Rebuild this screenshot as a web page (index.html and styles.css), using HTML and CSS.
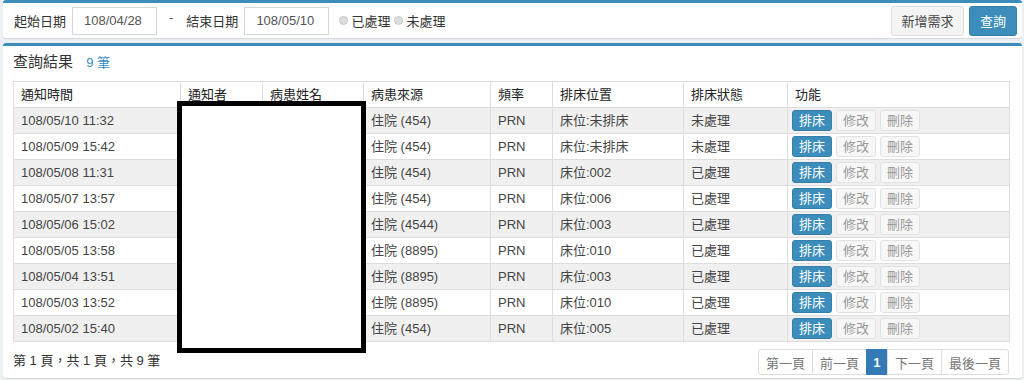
FILE: index.html
```html
<!DOCTYPE html>
<html lang="zh-Hant">
<head>
<meta charset="utf-8">
<link rel="stylesheet" href="styles.css">
</head>
<body>
<div class="panel search-panel">
  <div class="search-row">
    <span class="label">起始日期</span>
    <span class="input">108/04/28</span>
    <span class="dash">-</span>
    <span class="label">結束日期</span>
    <span class="input">108/05/10</span>
    <span class="radio"></span><span class="radio-label">已處理</span>
    <span class="radio"></span><span class="radio-label">未處理</span>
    <span class="spacer"></span>
    <span class="btn btn-default">新增需求</span>
    <span class="btn btn-primary">查詢</span>
  </div>
</div>

<div class="panel result-panel">
  <div class="result-title">查詢結果 <span class="count">9 筆</span></div>
  <div class="table-wrap">
    <table class="grid">
      <colgroup>
        <col class="c1"><col class="c2"><col class="c3"><col class="c4"><col class="c5"><col class="c6"><col class="c7"><col>
      </colgroup>
      <thead>
        <tr><th>通知時間</th><th>通知者</th><th>病患姓名</th><th>病患來源</th><th>頻率</th><th>排床位置</th><th>排床狀態</th><th>功能</th></tr>
      </thead>
      <tbody>
        <tr><td>108/05/10 11:32</td><td></td><td></td><td>住院 (454)</td><td>PRN</td><td>床位:未排床</td><td>未處理</td><td class="ops"><span class="sbtn blue">排床</span><span class="sbtn">修改</span><span class="sbtn">刪除</span></td></tr>
        <tr><td>108/05/09 15:42</td><td></td><td></td><td>住院 (454)</td><td>PRN</td><td>床位:未排床</td><td>未處理</td><td class="ops"><span class="sbtn blue">排床</span><span class="sbtn">修改</span><span class="sbtn">刪除</span></td></tr>
        <tr><td>108/05/08 11:31</td><td></td><td></td><td>住院 (454)</td><td>PRN</td><td>床位:002</td><td>已處理</td><td class="ops"><span class="sbtn blue">排床</span><span class="sbtn">修改</span><span class="sbtn">刪除</span></td></tr>
        <tr><td>108/05/07 13:57</td><td></td><td></td><td>住院 (454)</td><td>PRN</td><td>床位:006</td><td>已處理</td><td class="ops"><span class="sbtn blue">排床</span><span class="sbtn">修改</span><span class="sbtn">刪除</span></td></tr>
        <tr><td>108/05/06 15:02</td><td></td><td></td><td>住院 (4544)</td><td>PRN</td><td>床位:003</td><td>已處理</td><td class="ops"><span class="sbtn blue">排床</span><span class="sbtn">修改</span><span class="sbtn">刪除</span></td></tr>
        <tr><td>108/05/05 13:58</td><td></td><td></td><td>住院 (8895)</td><td>PRN</td><td>床位:010</td><td>已處理</td><td class="ops"><span class="sbtn blue">排床</span><span class="sbtn">修改</span><span class="sbtn">刪除</span></td></tr>
        <tr><td>108/05/04 13:51</td><td></td><td></td><td>住院 (8895)</td><td>PRN</td><td>床位:003</td><td>已處理</td><td class="ops"><span class="sbtn blue">排床</span><span class="sbtn">修改</span><span class="sbtn">刪除</span></td></tr>
        <tr><td>108/05/03 13:52</td><td></td><td></td><td>住院 (8895)</td><td>PRN</td><td>床位:010</td><td>已處理</td><td class="ops"><span class="sbtn blue">排床</span><span class="sbtn">修改</span><span class="sbtn">刪除</span></td></tr>
        <tr><td>108/05/02 15:40</td><td></td><td></td><td>住院 (454)</td><td>PRN</td><td>床位:005</td><td>已處理</td><td class="ops"><span class="sbtn blue">排床</span><span class="sbtn">修改</span><span class="sbtn">刪除</span></td></tr>
      </tbody>
    </table>
    <div class="redact"></div>
  </div>
  <div class="footer">
    <span class="pageinfo">第 1 頁，共 1 頁，共 9 筆</span>
    <div class="pager">
      <span class="pg">第一頁</span><span class="pg">前一頁</span><span class="pg active">1</span><span class="pg">下一頁</span><span class="pg">最後一頁</span>
    </div>
  </div>
</div>
</body>
</html>
```

FILE: styles.css
```css
* { box-sizing: border-box; }
html, body { margin: 0; padding: 0; }
body {
  background: #ecf0f5;
  font-family: "Liberation Sans", "Noto Sans CJK TC", sans-serif;
  font-size: 13px;
  color: #333;
  width: 1024px;
  height: 380px;
  overflow: hidden;
}
.panel {
  background: #fff;
  border-top: 3px solid #3c8dbc;
  margin: 0 2px 0 3px;
  border-radius: 3px;
  box-shadow: 0 1px 1px rgba(0,0,0,0.1);
}
.search-panel { height: 38px; }
.search-row {
  display: flex;
  align-items: center;
  height: 35px;
  padding: 0 5px 0 11px;
}
.label { color: #333; margin-right: 6px; font-size: 13px; }
.input {
  display: inline-flex;
  align-items: center;
  width: 85px;
  height: 28px;
  border: 1px solid #d2d6de;
  padding-left: 11px;
  color: #555;
  font-size: 13px;
}
.dash { margin: 0 13px 0 12px; color: #555; position: relative; top: -3px; }
.radio {
  width: 9px; height: 9px;
  border-radius: 50%;
  background: #ddd;
  border: 1px solid #c8c8c8;
  margin: 0 3px 0 10px;
}
.radio + .radio-label + .radio { margin-left: 4px; }
.radio-label { color: #333; }
.spacer { flex: 1; }
.btn {
  display: inline-flex;
  align-items: center;
  justify-content: center;
  height: 30px;
  border-radius: 3px;
  font-size: 13px;
}
.btn-default {
  width: 73px;
  background: #f4f4f4;
  border: 1px solid #ddd;
  color: #444;
  margin-right: 5px;
}
.btn-primary {
  width: 48px;
  background: #3c8dbc;
  border: 1px solid #367fa9;
  color: #fff;
}
.result-panel {
  margin-top: 5px;
  height: 335px;
  padding: 0 10px;
}
.result-title {
  font-size: 15px;
  line-height: 22px;
  padding: 5px 0 7px;
  color: #333;
}
.count { color: #3c8dbc; font-size: 13px; margin-left: 9px; }
.table-wrap { position: relative; }
.grid {
  width: 997px;
  border-collapse: collapse;
  border: 1px solid #ddd;
  table-layout: fixed;
}
.c1 { width: 167px; } .c2 { width: 82px; } .c3 { width: 101px; } .c4 { width: 127px; }
.c5 { width: 62px; } .c6 { width: 131px; } .c7 { width: 104px; }
.grid th, .grid td {
  border: 1px solid #ddd;
  text-align: left;
  padding: 3px 7px;
  height: 26px;
  line-height: 19px;
  font-weight: normal;
  white-space: nowrap;
}
.grid th { color: #222; }
.grid td { color: #444; }
.grid tbody tr:nth-child(odd) td { background: #f0f0f0; }
.grid td.ops { padding: 0 4px; }
.sbtn {
  display: inline-flex;
  align-items: center;
  justify-content: center;
  width: 40px;
  height: 21px;
  margin-right: 4px;
  background: #f7f7f7;
  border: 1px solid #e2e2e2;
  border-radius: 3px;
  color: #999;
  vertical-align: middle;
}
.sbtn.blue { background: #3c8dbc; border-color: #367fa9; color: #fff; }
.redact {
  position: absolute;
  left: 164px;
  top: 20px;
  width: 189px;
  height: 252px;
  border: 5px solid #000;
  background: #fff;
}
.footer {
  display: flex;
  align-items: center;
  justify-content: space-between;
  padding: 7px 3px 0 0;
}
.pageinfo { color: #333; font-size: 13px; position: relative; top: -3px; }
.pager { display: flex; }
.pg {
  display: inline-flex;
  align-items: center;
  justify-content: center;
  height: 26px;
  padding: 0 7px;
  border: 1px solid #ddd;
  margin-left: -1px;
  color: #777;
  background: #fff;
  font-size: 13px;
}
.pg:first-child { border-radius: 3px 0 0 3px; }
.pg:last-child { border-radius: 0 3px 3px 0; }
.pg.active { background: #337ab7; border-color: #337ab7; color: #fff; font-weight: bold; width: 22px; padding: 0; }
```
